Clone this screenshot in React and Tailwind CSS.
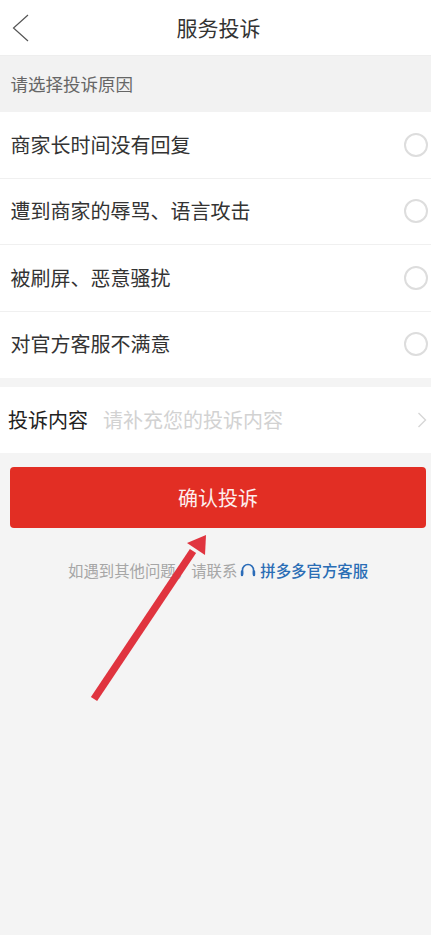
const reasons = ['商家长时间没有回复', '遭到商家的辱骂、语言攻击', '被刷屏、恶意骚扰', '对官方客服不满意'];

const font = { fontFamily: '"Noto Sans CJK SC", "Noto Sans", sans-serif' };

export default function App() {
  return (
    <div style={font} className="relative h-[935px] w-[431px] overflow-hidden bg-[#f4f4f4]">
      {/* Header */}
      <div className="relative flex h-[56px] items-center justify-center border-b border-[#eeeeee] bg-white pl-[6px]">
        <svg className="absolute left-[12px] top-[14px] h-[28px] w-[18px]" viewBox="0 0 18 28" fill="none">
          <path d="M16 1 1.5 14 16 27" stroke="#555555" strokeWidth="1.2" />
        </svg>
        <span className="text-[21px] leading-none text-[#333333]">服务投诉</span>
      </div>

      <div className="flex h-[56px] items-center bg-[#f2f2f2] pl-[10.5px] text-[17.5px] text-[#666666]">请选择投诉原因</div>

      {/* Reasons */}
      <div className="bg-white">
        {reasons.map((reason, i) => (
          <div
            key={reason}
            className={`flex h-[66.5px] items-center justify-between border-b pl-[10.5px] pr-[3px] text-[20px] text-[#333333] ${
              i < reasons.length - 1 ? 'border-[#f0f0f0]' : 'border-white'
            }`}
          >
            <span className="-translate-y-[0.5px]">{reason}</span>
            <span className="h-[24px] w-[24px] rounded-full border-2 border-[#dddddd]"></span>
          </div>
        ))}
      </div>

      {/* Complaint content */}
      <div className="mt-[9px] flex h-[66px] items-center bg-white pl-[8px] pr-[4px] text-[20px]">
        <span className="text-[#222222]">投诉内容</span>
        <span className="ml-[15px] flex-1 text-[#d2d2d2]">请补充您的投诉内容</span>
        <svg className="h-[18px] w-[10px]" viewBox="0 0 10 18" fill="none">
          <path d="M1.5 2 8.5 9 1.5 16" stroke="#d6d6d6" strokeWidth="1.4" />
        </svg>
      </div>

      <button className="mx-[10px] mt-[14px] flex h-[61px] w-[416px] items-center justify-center rounded-[4px] bg-[#e22e24] text-[20px] text-[#fdeeee]">
        确认投诉
      </button>

      {/* Contact */}
      <div className="mt-[31px] flex items-center pl-[68px] text-[15.4px] leading-[22px]">
        <span className="text-[#a6a6a6]">如遇到其他问题，请联系</span>
        <svg className="ml-[2px] h-[16px] w-[18px]" viewBox="0 0 18 16" fill="none">
          <path d="M3.5 12.5V8a5.5 5.5 0 0 1 11 0v4.5" stroke="#2b6cb8" strokeWidth="1.6" />
          <path d="M3 9.5v3.5M15 9.5v3.5" stroke="#2b6cb8" strokeWidth="2.4" strokeLinecap="round" />
        </svg>
        <span className="ml-[3px] font-medium text-[#2a6db5]">拼多多官方客服</span>
      </div>

      {/* Annotation arrow */}
      <svg className="absolute left-0 top-0 h-[935px] w-[431px]" viewBox="0 0 431 935" fill="none">
        <path d="M94 699 193 551" stroke="#e0343f" strokeWidth="7.5" />
        <path d="M206 535 187 543 205 555Z" fill="#e0343f" />
      </svg>
    </div>
  );
}
